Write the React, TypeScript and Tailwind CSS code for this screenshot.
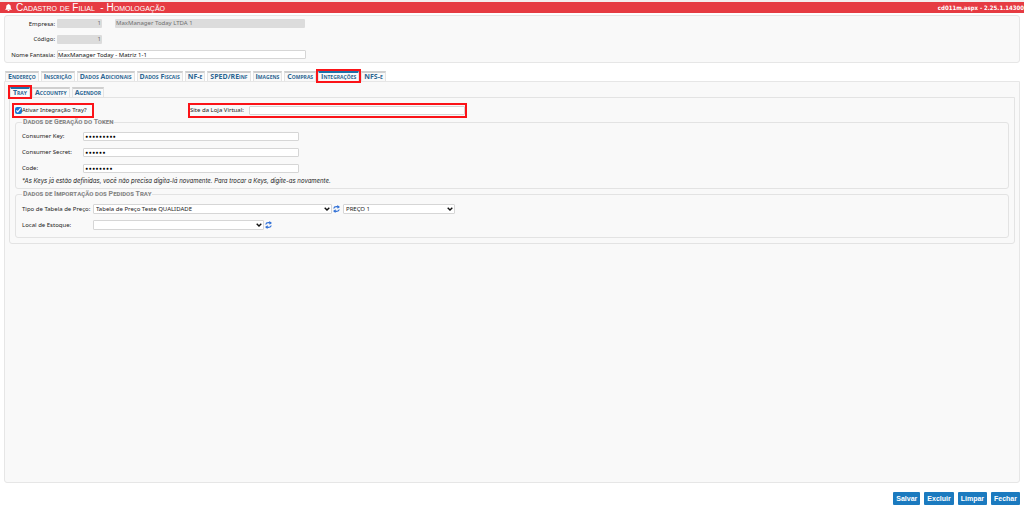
import React, { useState } from "react";
import type { ReactNode } from "react";

const mainTabs = [
  "Endereço", "Inscrição", "Dados Adicionais", "Dados Fiscais", "NF-e",
  "SPED/REinf", "Imagens", "Compras", "Integrações", "NFS-e",
];
const subTabs = ["Tray", "Accountfy", "Agendor"];
const actions = ["Salvar", "Excluir", "Limpar", "Fechar"];

const field = "h-[9px] rounded-[1px] border border-[#d6d6d6] bg-white text-[6px] leading-[7px] text-[#111] outline-none";
const locked = "h-[9px] rounded-[1px] bg-[#dcdcdc] px-px text-[6px] leading-[9px] text-[#6e6e6e] outline-none";

function Highlight({ inset }: { inset: string }) {
  return <span aria-hidden="true" className={`pointer-events-none absolute border-2 border-[#fb1318] ${inset}`} />;
}

function Tabs({ items, active, label }: { items: string[]; active: string; label: string }) {
  return (
    <div role="tablist" aria-label={label} className="flex gap-[2px] pl-px">
      {items.map((item) => (
        <button
          key={item}
          type="button"
          role="tab"
          aria-selected={item === active}
          className={`relative h-[10px] border-x border-t-2 border-x-[#e4e4e4] bg-[#f9f9f9] px-[2px] font-['Open_Sans',sans-serif] text-[7px] leading-[8px] font-bold whitespace-nowrap text-[#2a6592] [font-variant:small-caps] ${
            item === active ? "border-t-[#1d6fa8]" : "border-t-[#cfcfcf]"
          }`}
        >
          {item}
          {item === active && <Highlight inset="-inset-x-[3px] -top-[4px] -bottom-[2px]" />}
        </button>
      ))}
    </div>
  );
}

function Group({ title, children }: { title: string; children: ReactNode }) {
  return (
    <fieldset className="rounded-[3px] border border-[#e3e3e3] px-[6px]">
      <legend className="px-px font-['Roboto',sans-serif] text-[7px] leading-[8px] font-bold text-[#858585] [font-variant:small-caps]">{title}</legend>
      {children}
    </fieldset>
  );
}

function Secret({ id, label, value }: { id: string; label: string; value: string }) {
  return (
    <div className="flex h-[16px] items-center">
      <label htmlFor={id} className="w-[61px]">{label}</label>
      <input id={id} type="password" defaultValue={value} className={`${field} w-[216px] px-px font-['DejaVu_Sans_Condensed','DejaVu_Sans',sans-serif] font-bold text-black`} />
    </div>
  );
}

function Picker({ id, label, options, width }: { id: string; label?: string; options: string[]; width: string }) {
  return (
    <div className={`relative h-[10px] ${width}`}>
      <select id={id} aria-label={label} className="block h-[10px] w-full appearance-none rounded-[1px] border border-[#d6d6d6] bg-white px-[2px] text-[6px] leading-[8px] text-[#222] outline-none">
        {options.map((o) => <option key={o}>{o}</option>)}
      </select>
      <svg viewBox="0 0 6 4" className="pointer-events-none absolute top-[3px] right-[2px] h-[4px] w-[6px]" fill="none" stroke="#111" strokeWidth="1.4">
        <path d="M.7.7 3 3 5.3.7" />
      </svg>
    </div>
  );
}

function Refresh({ label }: { label: string }) {
  return (
    <button type="button" aria-label={label} className="mx-px">
      <svg viewBox="0 0 14 16" className="block h-[8px] w-[7px]" fill="none" stroke="#2f6fd6" strokeWidth="2.4">
        <path d="M1.500 7C2 4 5 2.800 10 3.600" />
        <path d="M8.500 0 14 3.800 9 7.500z" fill="#2f6fd6" stroke="none" />
        <path d="M12.500 9C12 12 9 13.200 4 12.400" />
        <path d="M5.500 8.500 0 12.200 5 16z" fill="#2f6fd6" stroke="none" />
      </svg>
    </button>
  );
}

export default function App() {
  const [enabled, setEnabled] = useState(true);
  return (
    <div className="flex min-h-screen flex-col bg-white font-['Noto_Sans',sans-serif] text-[6px] leading-[8px] text-[#222]">
      <header className="flex h-[13px] items-center border-t-2 border-[#f3eeee] bg-[#e63b42] pl-[5px] text-white">
        <svg viewBox="0 0 14 14" className="h-[7px] w-[7px]" fill="currentColor">
          <path d="M7 0c.8 0 1.200.5 1.200 1.200C10.500 1.800 11.500 3.500 11.500 6c0 2.500.8 3.600 2 4.500v.8H.5v-.8c1.200-.9 2-2 2-4.500 0-2.500 1-4.200 3.300-4.800C5.800.5 6.200 0 7 0zM5 12h4c0 1.200-.8 2-2 2s-2-.8-2-2z" />
        </svg>
        <h1 className="ml-[4px] font-['Liberation_Sans',sans-serif] text-[10px] leading-[11px] whitespace-pre [font-variant:small-caps]">Cadastro de Filial  - Homologação</h1>
        <span className="ml-auto font-['DejaVu_Sans_Condensed','DejaVu_Sans',sans-serif] font-bold">cd011m.aspx - 2.25.1.14300</span>
      </header>

      <main className="flex flex-1 flex-col px-[4px] pt-[2px]">
        <section className="rounded-[3px] border border-[#e6e6e6] bg-[#f9f9f9]">
          <div className="flex h-[15px] items-center">
            <label htmlFor="empresa" className="w-[52px] pr-[2px] text-right">Empresa:</label>
            <input id="empresa" readOnly value="1" className={`${locked} w-[45px] text-right`} />
            <input aria-label="Nome da empresa" readOnly value="MaxManager Today LTDA 1" className={`${locked} ml-[13px] w-[190px]`} />
          </div>
          <div className="flex h-[16px] items-center">
            <label htmlFor="codigo" className="w-[52px] pr-[2px] text-right">Código:</label>
            <input id="codigo" readOnly value="1" className={`${locked} w-[45px] text-right`} />
          </div>
          <div className="flex h-[15px] items-center">
            <label htmlFor="fantasia" className="w-[52px] pr-[2px] text-right whitespace-nowrap">Nome Fantasia:</label>
            <input id="fantasia" defaultValue="MaxManager Today - Matriz 1-1" className={`${field} w-[249px]`} />
          </div>
        </section>

        <div className="mt-[8px]">
          <Tabs items={mainTabs} active="Integrações" label="Cadastro" />
        </div>
        <section className="flex-1 rounded-b-[3px] border border-[#e6e6e6] bg-[#f9f9f9] px-[4px] pt-[5px]">
          <Tabs items={subTabs} active="Tray" label="Integrações" />
          <div className="rounded-b-[3px] border border-[#e3e3e3] px-[5px] pt-[4px] pb-[5px]">
            <div className="flex h-[16px] items-center">
              <div className="relative flex h-[15px] w-[76px] items-center whitespace-nowrap">
                <input id="ativar" type="checkbox" checked={enabled} onChange={(e) => setEnabled(e.target.checked)} className="h-[7px] w-[7px] shrink-0 accent-[#1976d2]" />
                <label htmlFor="ativar">Ativar Integração Tray?</label>
                <Highlight inset="-inset-x-[3px] inset-y-0" />
              </div>
              <div className="relative ml-[99px] flex h-[15px] items-center">
                <label htmlFor="site" className="w-[59px] whitespace-nowrap">Site da Loja Virtual:</label>
                <input id="site" className={`${field} w-[216px]`} />
                <Highlight inset="-inset-x-[2px] inset-y-0" />
              </div>
            </div>
            <Group title="Dados de Geração do Token">
              <div className="pt-[2px] pb-[3px]">
                <Secret id="key" label="Consumer Key:" value="123456789" />
                <Secret id="secret" label="Consumer Secret:" value="123456" />
                <Secret id="code" label="Code:" value="12345678" />
                <p className="pt-px font-['Inter',sans-serif] italic">*As Keys já estão definidas, você não precisa digita-lá novamente. Para trocar a Keys, digite-as novamente.</p>
              </div>
            </Group>
            <div className="mt-px">
              <Group title="Dados de Importação dos Pedidos Tray">
                <div className="pt-[3px] pb-[4px]">
                  <div className="flex h-[16px] items-center">
                    <label htmlFor="tabela" className="w-[71px] whitespace-nowrap">Tipo de Tabela de Preço:</label>
                    <Picker id="tabela" options={["Tabela de Preço Teste QUALIDADE"]} width="w-[239px]" />
                    <Refresh label="Atualizar tabelas" />
                    <div className="ml-[2px]"><Picker id="preco" label="Preço" options={["PREÇO 1"]} width="w-[112px]" /></div>
                  </div>
                  <div className="flex h-[16px] items-center">
                    <label htmlFor="estoque" className="w-[71px]">Local de Estoque:</label>
                    <Picker id="estoque" options={[""]} width="w-[171px]" />
                    <Refresh label="Atualizar locais" />
                  </div>
                </div>
              </Group>
            </div>
          </div>
        </section>
        <footer className="mt-[9px] flex justify-end gap-[4px]">
          {actions.map((a) => (
            <button key={a} type="button" className="h-[13px] rounded-[1px] bg-[#1b7abf] px-[3px] font-['Liberation_Sans',sans-serif] text-[7px] leading-[13px] font-bold text-white">{a}</button>
          ))}
        </footer>
      </main>
    </div>
  );
}
